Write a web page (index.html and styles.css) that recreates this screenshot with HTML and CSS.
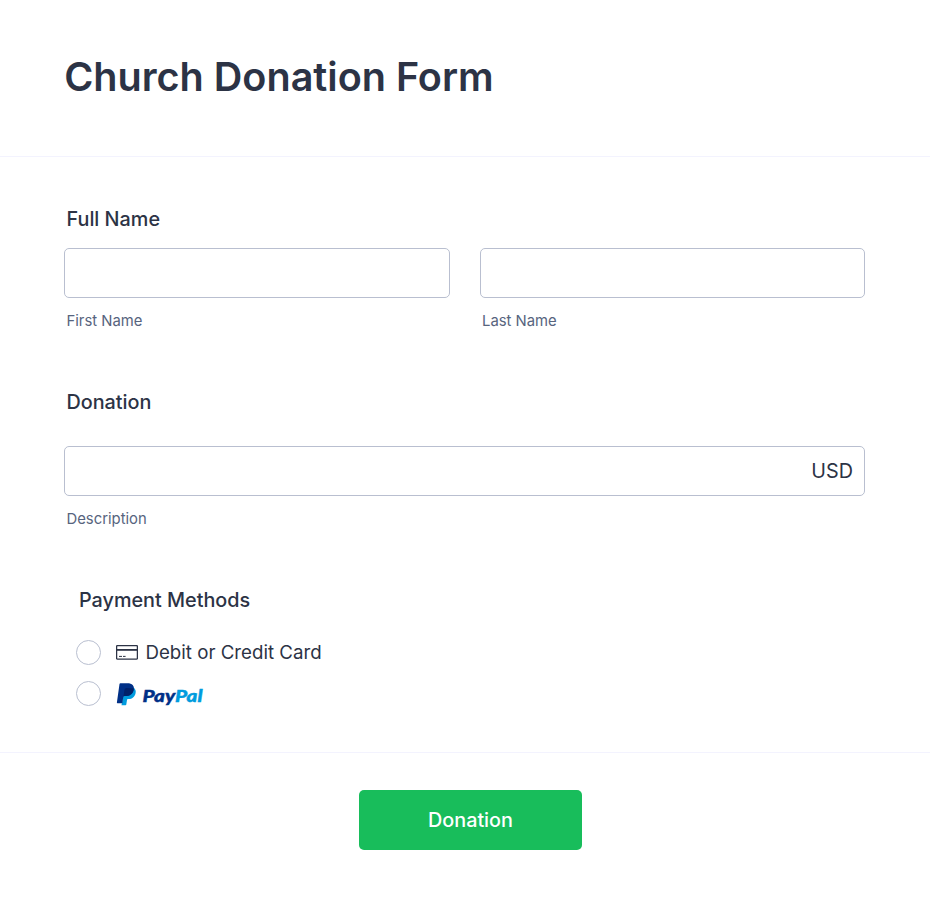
FILE: index.html
```html
<!DOCTYPE html>
<html lang="en">
<head>
<meta charset="utf-8">
<title>Church Donation Form</title>
<link rel="stylesheet" href="styles.css">
</head>
<body>
<form class="form">
  <header class="head"><h1>Church Donation Form</h1></header>
  <main class="body">
    <section class="names">
      <h2 class="label">Full Name</h2>
      <div class="row">
        <div class="field"><input class="box" type="text" id="first"><label class="sub" for="first">First Name</label></div>
        <div class="field"><input class="box" type="text" id="last"><label class="sub" for="last">Last Name</label></div>
      </div>
    </section>
    <section class="amount">
      <h2 class="label">Donation</h2>
      <div class="box money"><span>USD</span></div>
      <div class="sub">Description</div>
    </section>
    <section class="pay">
      <h2 class="label">Payment Methods</h2>
      <label class="option"><span class="radio"></span>
        <svg class="card" width="22" height="15" viewBox="0 0 22 15"><rect x=".6" y=".6" width="20.8" height="13.6" rx="1" fill="none" stroke="#2c3345" stroke-width="1.3"/><path d="M1 4.9h20" stroke="#2c3345" stroke-width="1.8"/><path d="M3 11.4h3M7 11.4h2.6" stroke="#2c3345"/></svg>
        <span>Debit or Credit Card</span></label>
      <label class="option"><span class="radio"></span>
        <svg class="paypal" width="90" height="26" viewBox="0 0 90 26"><path fill="#009cde" d="M17.500 6.500C19.600 8 20.200 10 19.500 12.500C18.700 16 16 18 12.800 18H12C11.400 18 11.100 18.400 11 18.900L10.300 23.400C10.200 23.900 10 24.200 9.500 24.200H5.500L7.500 13Z"/><path fill="#003087" d="M4.400 2.200H11.500C16 2.200 18.700 4.500 17.700 9C16.600 13.300 14 15 10 15H8.500C7.800 15 7.400 15.400 7.300 16L6.300 22.200H1.500C1 22.200.8 21.900.9 21.400L3.500 3.100C3.600 2.500 3.900 2.200 4.400 2.200Z"/><path fill="#012169" d="M17.800 7.500C17.300 12.200 14.800 15 10 15H8.500C7.900 15 7.500 15.300 7.400 15.700L8.400 9.300C8.600 8 9.200 7.200 10.500 7Z"/><text class="mark" x="26.500" y="20.600" textLength="60" lengthAdjust="spacingAndGlyphs"><tspan fill="#003087" stroke="#003087">Pay</tspan><tspan fill="#009cde" stroke="#009cde">Pal</tspan></text></svg></label>
    </section>
  </main>
  <footer class="foot"><button class="submit" type="button">Donation</button></footer>
</form>
</body>
</html>
```
FILE: styles.css
```css
* { box-sizing: border-box; }
body { margin: 0; background: #fff; color: #2c3345; font-family: Inter, sans-serif; }
.form { height: 899px; }
.head { height: 157px; padding: 52px 64.2px 0; border-bottom: 1px solid #f3f3fe; }
h1 { margin: 0; font-size: 39.55px; line-height: 50px; font-weight: 600; }
.body { height: 596px; padding: 49px 64.6px 0 64.4px; border-bottom: 1px solid #f3f3fe; }
.label { margin: 0; padding-left: 2.1px; font-size: 19.8px; line-height: 26px; font-weight: 500; }
.row { display: flex; gap: 30px; margin-top: 16.4px; }
.field { flex: 1; }
.box { display: block; width: 100%; height: 49.6px; border: 1px solid #b9bfd0; border-radius: 5px; background: #fff; }
.sub { display: block; margin-top: 13px; padding-left: 2.1px; font-size: 14.85px; line-height: 20px; color: #57647e; }
.amount { margin-top: 58px; }
.money { display: flex; align-items: center; justify-content: flex-end; margin-top: 31.4px; padding-right: 11.5px; font-size: 19.8px; }
.pay { margin-top: 58px; padding-left: 12px; }
.option { display: flex; align-items: center; height: 41px; font-size: 18.7px; }
.pay .label { padding-left: 2.6px; margin-bottom: 19px; }
.radio { width: 25px; height: 25px; border: 1px solid #b9bfd0; border-radius: 50%; }
.card { margin: 1px 7.5px 0 14.6px; }
.paypal { margin: 2px 0 0 14.6px; }
.mark { font: italic 900 17px Lato, sans-serif; stroke-width: .4px; }
.foot { display: flex; justify-content: center; padding: 37.3px 0 0 11px; }
.submit { width: 222.5px; height: 59.5px; border: 0; border-radius: 5px; background: #18bd5b; color: #fff; font: 500 19.8px Inter, sans-serif; }
```
